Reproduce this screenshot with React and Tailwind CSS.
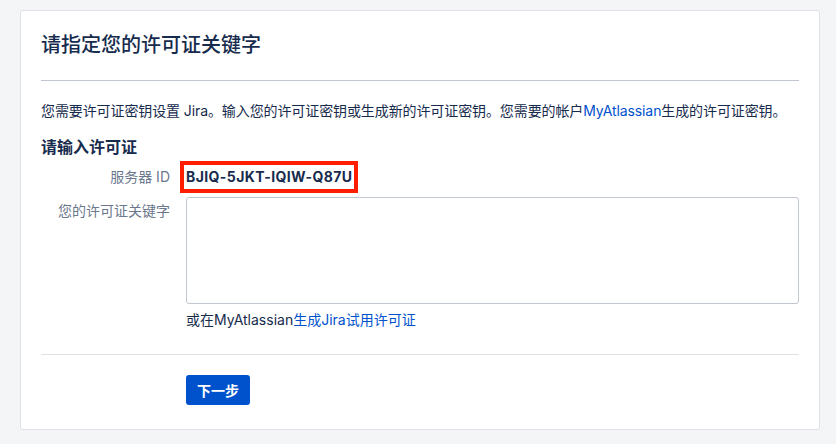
export default function App() {
  const font = { fontFamily: 'Inter, "Noto Sans CJK SC", sans-serif' };

  return (
    <div className="min-h-[444px] bg-[#f4f5f7] pt-[10px] pl-[20px] text-[#172b4d]" style={font}>
      <div className="w-[800px] h-[420px] bg-white border border-[#dfe1e6] rounded-[3px] px-5 pt-[22px]">
        <h1 className="text-[20px] leading-[24px] font-medium">请指定您的许可证关键字</h1>
        <hr className="mt-[23px] border-0 border-t border-[#c1c7d0]" />

        <p className="mt-[20px] text-[14px] leading-[20px] tracking-[-0.1px]">
          您需要许可证密钥设置 Jira。输入您的许可证密钥或生成新的许可证密钥。您需要的帐户
          <a href="#" className="text-[#0052cc]">MyAtlassian</a>
          生成的许可证密钥。
        </p>

        <h2 className="mt-[16px] text-[16px] leading-[20px] font-semibold">请输入许可证</h2>

        <div className="mt-[10px] flex items-center text-[14px] leading-[20px]">
          <div className="w-[129px] text-right text-[#6b778c]">服务器 ID</div>
          <div className="ml-[16px]">
            {/* red highlight drawn around the server id */}
            <span className="inline-block font-bold tracking-[0.4px] outline-4 outline-solid outline-[#ff1f00] outline-offset-2">
              BJIQ-5JKT-IQIW-Q87U
            </span>
          </div>
        </div>

        <div className="mt-[10px] flex text-[14px] leading-[20px]">
          <div className="w-[129px] pt-[4px] text-right text-[#6b778c]">您的许可证关键字</div>
          <div className="ml-[16px] flex-1">
            <textarea className="block w-full h-[107px] border border-[#c1c7d0] rounded-[3px] resize-none" />
            <div className="mt-[6px]">
              或在MyAtlassian<a href="#" className="text-[#0052cc]">生成Jira试用许可证</a>
            </div>
          </div>
        </div>

        <hr className="mt-[24px] border-0 border-t border-[#dfe1e6]" />

        <div className="mt-[20px] pl-[145px]">
          <button className="w-[64px] h-[30px] bg-[#0052cc] text-white text-[14px] font-bold rounded-[3px]">
            下一步
          </button>
        </div>
      </div>
    </div>
  );
}
